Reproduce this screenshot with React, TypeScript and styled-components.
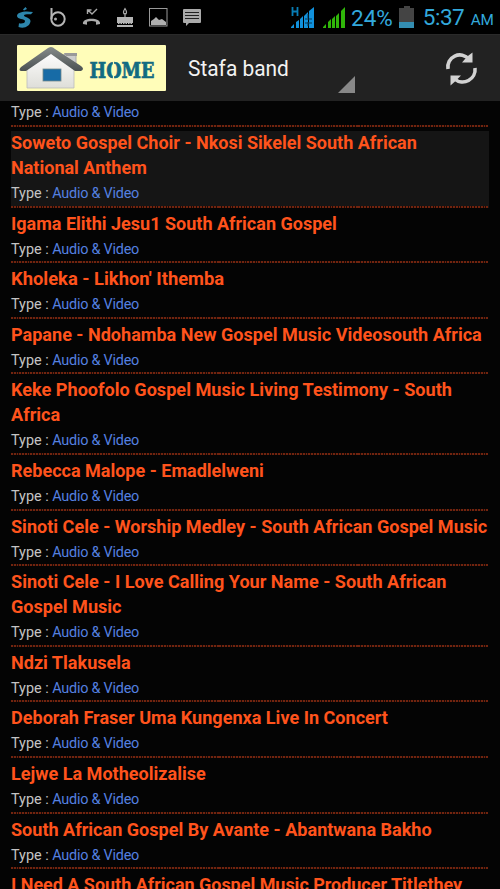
import React from "react";
import styled, { createGlobalStyle } from "styled-components";

const Global = createGlobalStyle`
  html, body, #root { margin: 0; height: 889px; background: #040404; overflow: hidden; }
  * { box-sizing: border-box; }
`;
const Screen = styled.div`
  width: 500px;
  height: 889px;
  overflow: hidden;
  display: flex;
  flex-direction: column;
  background: #040404;
  font-family: Roboto, "Liberation Sans", sans-serif;
`;
const StatusBar = styled.header`
  height: 34px;
  flex: none;
  background: #000;
  display: flex;
  justify-content: space-between;
`;
const StatusIcons = styled.svg`
  display: block;
  flex: none;
`;
const Battery = styled(StatusIcons)`
  margin-left: 6px;
`;
const Readings = styled.div`
  display: flex;
  align-items: center;
  height: 34px;
  width: 210px;
  color: #33a9dc;
  white-space: nowrap;
`;
const Reading = styled.span<{ $left: number; $spacing?: number }>`
  margin-left: ${(p) => p.$left}px;
  font-size: 22.5px;
  letter-spacing: ${(p) => p.$spacing ?? 0}px;
  line-height: 34px;
  padding-top: 2px;
`;
const Meridiem = styled.small`
  font-size: 15.3px;
  letter-spacing: -0.2px;
  margin-left: 6.5px;
`;
const ActionBar = styled.nav`
  height: 67.4px;
  flex: none;
  background: #222;
  border-top: 1px solid #2a2a2a;
  display: flex;
  align-items: flex-start;
  padding: 10px 22px 0 17px;
  color: #f3f3f3;
`;
const HomeLogo = styled.svg`
  width: 149px;
  height: 46px;
  flex: none;
`;
const Spinner = styled.div`
  width: 166.5px;
  margin-left: 22px;
  height: 48px;
  display: flex;
  justify-content: space-between;
`;
const SpinnerLabel = styled.span`
  font-size: 22px;
  line-height: 48px;
  transform: scaleX(0.95);
  transform-origin: left;
`;
const Corner = styled.svg`
  width: 17px;
  height: 17px;
  align-self: flex-end;
`;
const Refresh = styled.svg`
  width: 34px;
  height: 36px;
  margin: 6px 0 0 auto;
`;
const List = styled.main`
  padding: 0 11px;
  margin-top: -1px;
`;
const Item = styled.article<{ $active?: boolean }>`
  background: ${(p) => (p.$active ? "#151515" : "transparent")};
  margin-bottom: 4px;
`;
const Title = styled.h2<{ $condense: number }>`
  margin: 0;
  width: max-content;
  font-size: 19px;
  line-height: 24px;
  padding-bottom: 1px;
  font-weight: 700;
  color: #ff531c;
  white-space: pre;
  transform: scaleX(${(p) => p.$condense});
  transform-origin: left;
`;
const TypeLine = styled.p`
  margin: 0;
  height: 24.6px;
  line-height: 26px;
  font-size: 14.4px;
  color: #c4c4c4;
`;
const TypeLink = styled.span`
  color: #5480e0;
  letter-spacing: -0.23px;
`;
const Divider = styled.div`
  height: 2px;
  width: 477px;
  background: repeating-linear-gradient(90deg, #71240f 0 1.8px, #1c0a06 1.8px 2.78px);
`;

const items: { lines: string[]; condense?: number; active?: boolean }[] = [
  { lines: [] },
  { lines: ["Soweto Gospel Choir - Nkosi Sikelel South African", "National Anthem"], condense: 0.948, active: true },
  { lines: ["Igama Elithi Jesu1 South African Gospel"], condense: 0.948 },
  { lines: ["Kholeka - Likhon' Ithemba"], condense: 0.966 },
  { lines: ["Papane - Ndohamba New Gospel Music Videosouth Africa"] },
  { lines: ["Keke Phoofolo Gospel Music Living Testimony - South", "Africa"], condense: 0.953 },
  { lines: ["Rebecca Malope - Emadlelweni"], condense: 0.948 },
  { lines: ["Sinoti Cele - Worship Medley - South African Gospel Music"] },
  { lines: ["Sinoti Cele - I Love Calling Your Name - South African", "Gospel Music"], condense: 0.952 },
  { lines: ["Ndzi Tlakusela"] },
  { lines: ["Deborah Fraser Uma Kungenxa Live In Concert"] },
  { lines: ["Lejwe La Motheolizalise"] },
  { lines: ["South African Gospel By Avante - Abantwana Bakho"] },
  { lines: ["I Need A South African Gospel Music Producer Titlethey"], condense: 0.945 },
];

export default function App() {
  return (
    <Screen>
      <Global />
      <StatusBar>
        <StatusIcons width="215" height="34" viewBox="0 0 215 34" fill="none">
          <g fill="#2d86ac">
            <path d="M33 12C25 10.500 17 12 17 16c0 3.500 8 2.500 8 5.200 0 2-3 2.500-6 2l-.5 3.800c6 2 11.500-.8 12-5.700.3-4-7-4-6.500-5.800.5-1.500 4-1.200 7-1.200z" />
            <path d="M23 9.500l2.500-2.500 1.500 2-3 1.500z" />
          </g>
          <g stroke="#b5b5b5" strokeWidth="2">
            <path d="M51.500 8v11" />
            <circle cx="58" cy="19" r="6.700" />
          </g>
          <circle cx="55.500" cy="19" r="1.500" fill="#aaa" />
          <path d="M83 24c-1.500-7 18.500-7 17 0l-4 .8v-3q-4.500-1.500-9 0v3z" fill="#aaa" />
          <path d="M87.500 14v-4h4m-3.500 0 4 4 5-5" stroke="#aaa" strokeWidth="1.400" />
          <path d="M117 17h16v6h-16zM117 25h16v2h-16z" fill="#b5b5b5" />
          <path d="M118 23.500h14" stroke="#b5b5b5" strokeDasharray="1.500 1" />
          <path d="M125 8.500c-2 3-2 5.500 0 5.500s2-2.500 0-5.500zM125 13v4" stroke="#aaa" strokeWidth="1.200" />
          <rect x="149.500" y="8.500" width="17.500" height="17.500" stroke="#999" />
          <path d="M151 25v-4l3-2 2-2 3 3 3-1 4 3v3z" fill="#b0b0b0" />
          <path d="M184 9h16q1 0 1 1v12q0 1-1 1h-11l-3 3v-3h-2q-1 0-1-1V10q0-1 1-1z" fill="#aaa" />
          <path d="M185 12.500h14m-14 3h14m-14 3h14" stroke="#222" />
        </StatusIcons>
        <Readings>
          <StatusIcons width="61" height="34" viewBox="290 0 61 34">
            <path d="M292.500 7v9m5-9v9m-5-4.500h5" fill="none" stroke="#087db5" strokeWidth="1.800" />
            <path d="M291 28v-1l3-3v4zm5 0v-6l3-2v8zm4 0v-9l3-3v12zm4 0V16l4-4v16zm5 0V11l5-4v21z" fill="#1191dc" />
            <path d="M308 14v4m0 4v4m-3-7h7m-7 4h7" fill="none" stroke="#063b59" />
            <path d="M323 28v-1l3-3v4zm5 0v-6l3-3v9zm4 0v-9l3-3v12zm4 0v-12l3-3v15zm5 0V11l4-4v21z" fill="#30b609" />
          </StatusIcons>
          <Reading $left={0}>24%</Reading>
          <Battery width="16" height="34" viewBox="398 0 16 34">
            <path d="M398 8h5V6h6v2h4v20h-15z" fill="#444" />
            <path d="M398 22h15v6h-15z" fill="#348eb2" />
          </Battery>
          <Reading $left={8} $spacing={-0.5}>
            5:37<Meridiem>AM</Meridiem>
          </Reading>
        </Readings>
      </StatusBar>
      <ActionBar>
        <HomeLogo viewBox="0 0 149 46">
          <defs>
            <linearGradient id="wall" x2="0" y2="1">
              <stop stopColor="#fff" />
              <stop offset="1" stopColor="#deded9" />
            </linearGradient>
            <linearGradient id="roof" x2="0" y2="1">
              <stop stopColor="#858b8a" />
              <stop offset="1" stopColor="#4b5152" />
            </linearGradient>
          </defs>
          <rect width="149" height="46" rx="1" fill="#fffdb9" />
          <path d="M47 9h12v13l-12-8z" fill="#ccc" stroke="#aaa" />
          <path d="M47 8h13v3H49z" fill="#999" />
          <path d="M10 22 34 6l23 16v21H10z" fill="url(#wall)" stroke="#bbb" strokeWidth=".8" />
          <path d="M34 2q-1 0-3 1L4 22q-3 3 0 4h5L34 9l24 17h6q4-2 0-5L38 4q-2-2-4-2z" fill="url(#roof)" />
          <rect x="26" y="24" width="18" height="12" fill="#176ba6" stroke="#73888b" strokeWidth=".8" />
          <text x="72.500" y="33" textLength="65" lengthAdjust="spacingAndGlyphs" fontFamily="DejaVu Serif, serif" fontWeight="700" fontSize="22" fill="#126b82" stroke="#126b82" strokeWidth=".7">HOME</text>
          <path d="M96.500 15v20" stroke="#fffdb9" strokeWidth="1.200" />
        </HomeLogo>
        <Spinner>
          <SpinnerLabel>Stafa band</SpinnerLabel>
          <Corner viewBox="0 0 17 17"><path d="M17 0v17H0z" fill="#888" /></Corner>
        </Spinner>
        <Refresh viewBox="0 0 34 36">
          <path d="M4 18A12 12 0 0 1 25 8.200M31 17A12.500 12.500 0 0 1 10.500 28" fill="none" stroke="#d2d2d2" strokeWidth="3.600" />
          <path d="M28.500 1.500v10H18l3-3.500 3.500-3.500zM6.500 34.500V24.500h10.500l-6 6z" fill="#d2d2d2" />
        </Refresh>
      </ActionBar>
      <List>
        {items.map((item, i) => (
          <Item key={i} $active={item.active}>
            {item.lines.map((line) => (
              <Title key={line} $condense={item.condense ?? 0.95}>{line}</Title>
            ))}
            <TypeLine>Type : <TypeLink>Audio &amp; Video</TypeLink></TypeLine>
            <Divider />
          </Item>
        ))}
      </List>
    </Screen>
  );
}
